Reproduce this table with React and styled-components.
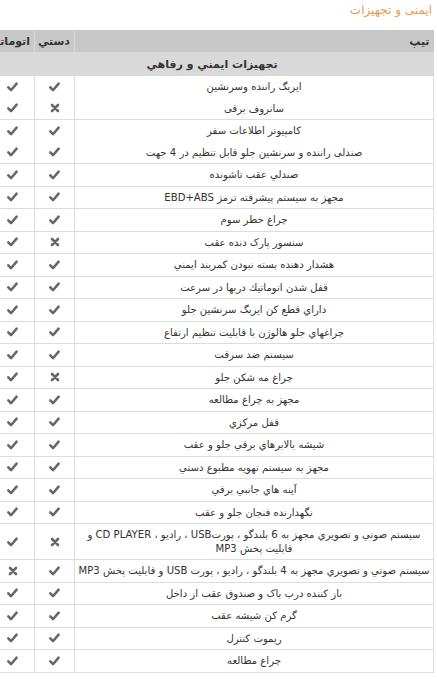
import React from 'react';
import styled, { createGlobalStyle } from 'styled-components';

const GlobalStyle = createGlobalStyle`
    html, body {
        margin: 0;
        padding: 0;
        background: #fff;
    }
    body {
        direction: rtl;
        font-family: Tahoma, "DejaVu Sans", sans-serif;
    }
`;

const Page = styled.div`
    width: 437px;
    overflow: hidden;
    padding-right: 3px;
    box-sizing: border-box;
`;

const Title = styled.h3`
    margin: 0 0 10px;
    padding: 1px 2px 0 0;
    font-size: 12px;
    font-weight: normal;
    line-height: 19px;
    color: #ee9a4d;
`;

const Table = styled.table`
    width: 443px;
    border-collapse: collapse;
    table-layout: fixed;
    font-size: 10.1px;
    color: #333;
`;

const Th = styled.th`
    box-sizing: border-box;
    width: ${props => props.w}px;
    height: 22px;
    padding: 0 4px;
    background: #c8c8c8;
    border-left: 1px solid #dadada;
    text-align: right;
    font-size: 11px;
    font-weight: bold;
    white-space: nowrap;
    overflow: hidden;
`;

const GroupCell = styled.td`
    height: 24px;
    padding: 0;
    background: #d9d9d9;
    text-align: center;
    font-size: 11px;
    font-weight: bold;
`;

const Td = styled.td`
    padding: 4px 2px;
    line-height: 13.5px;
    text-align: center;
    border-left: 1px solid #dcdcdc;
    border-right: 1px solid #dcdcdc;
    border-bottom: ${props => (props.joined ? 'none' : '1px solid #dcdcdc')};
    vertical-align: middle;
`;

const MarkCell = styled(Td)`
    padding: 0;
    line-height: 0;
`;

function Mark({ ok }) {
    return ok ? (
        <svg width="11" height="10" viewBox="0 0 11 10">
            <path d="M1.3 5.4 L4 8.2 L9.6 1.6" fill="none" stroke="#666" strokeWidth="2.5" strokeLinecap="round" strokeLinejoin="round" />
        </svg>
    ) : (
        <svg width="10" height="10" viewBox="0 0 10 10">
            <path d="M2 2 L8 8 M8 2 L2 8" fill="none" stroke="#666" strokeWidth="2.6" strokeLinecap="round" />
        </svg>
    );
}

const items = [
    { t: 'ایربگ راننده وسرنشین', m: 1, a: 1, joined: true },
    { t: 'سانروف برقی', m: 0, a: 1 },
    { t: 'کامپیوتر اطلاعات سفر', m: 1, a: 1, joined: true },
    { t: 'صندلی راننده و سرنشین جلو قابل تنظیم در 4 جهت', m: 1, a: 1 },
    { t: 'صندلي عقب تاشونده', m: 1, a: 1 },
    { t: 'مجهز به سیستم پیشرفته ترمز EBD+ABS', m: 1, a: 1 },
    { t: 'چراغ خطر سوم', m: 1, a: 1 },
    { t: 'سنسور پارک دنده عقب', m: 0, a: 1 },
    { t: 'هشدار دهنده بسته نبودن کمربند ایمني', m: 1, a: 1 },
    { t: 'قفل شدن اتوماتیك دربها در سرعت', m: 1, a: 1 },
    { t: 'داراي قطع کن ایربگ سرنشین جلو', m: 1, a: 1 },
    { t: 'چراغهاي جلو هالوژن با قابلیت تنظیم ارتفاع', m: 1, a: 1 },
    { t: 'سیستم ضد سرقت', m: 1, a: 1 },
    { t: 'چراغ مه شکن جلو', m: 0, a: 1 },
    { t: 'مجهز به چراغ مطالعه', m: 1, a: 1 },
    { t: 'قفل مرکزي', m: 1, a: 1 },
    { t: 'شیشه بالابرهاي برقي جلو و عقب', m: 1, a: 1 },
    { t: 'مجهز به سیستم تهویه مطبوع دستي', m: 1, a: 1 },
    { t: 'آینه هاي جانبي برقي', m: 1, a: 1 },
    { t: 'نگهدارنده فنجان جلو و عقب', m: 1, a: 1 },
    { t: 'سیستم صوتي و تصویري مجهز به 6 بلندگو ، پورتUSB ، رادیو ، CD PLAYER و قابلیت پخش MP3', m: 0, a: 1 },
    { t: 'سیستم صوتي و تصویري مجهز به 4 بلندگو ، رادیو ، پورت USB و قابلیت پخش MP3', m: 1, a: 0 },
    { t: 'باز کننده درب باک و صندوق عقب از داخل', m: 1, a: 1 },
    { t: 'گرم کن شیشه عقب', m: 1, a: 1 },
    { t: 'ریموت کنترل', m: 1, a: 1 },
    { t: 'چراغ مطالعه', m: 1, a: 1 },
];

export default function App() {
    return (
        <>
            <GlobalStyle />
            <Page>
                <Title>ایمنی و تجهیزات</Title>
                <Table>
                    <thead>
                        <tr>
                            <Th w={359}>تیپ</Th>
                            <Th w={40}>دستي</Th>
                            <Th w={44}>اتوماتيک</Th>
                        </tr>
                    </thead>
                    <tbody>
                        <tr>
                            <GroupCell colSpan={3}>تجهیزات ایمني و رفاهي</GroupCell>
                        </tr>
                        {items.map((row, i) => (
                            <tr key={i}>
                                <Td joined={row.joined}>{row.t}</Td>
                                <MarkCell joined={row.joined}><Mark ok={row.m} /></MarkCell>
                                <MarkCell joined={row.joined}><Mark ok={row.a} /></MarkCell>
                            </tr>
                        ))}
                    </tbody>
                </Table>
            </Page>
        </>
    );
}
